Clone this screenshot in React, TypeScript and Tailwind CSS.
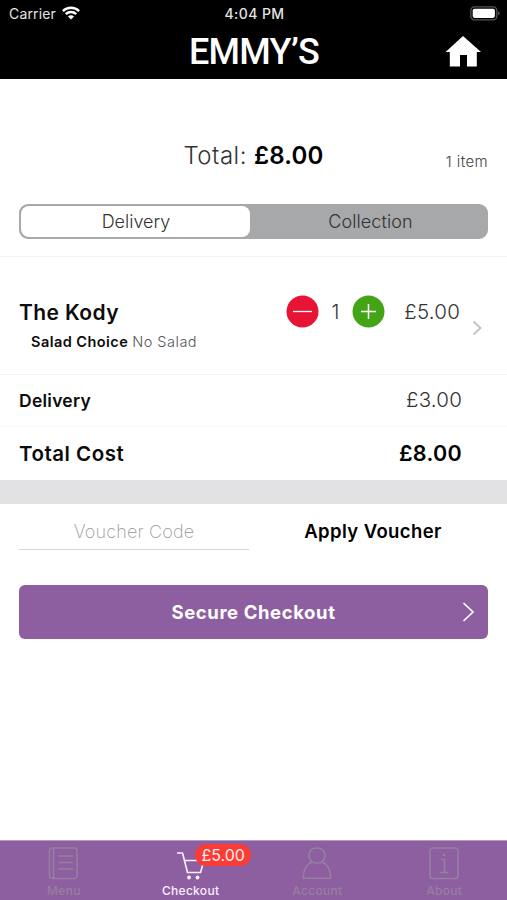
import type { ReactNode } from "react";

function StatusBar() {
  return (
    <div className="flex h-7 items-center justify-between pr-[7px] pl-[9px] text-[#e4e4e4]">
      <div className="flex w-40 items-center gap-[6px]">
        <span className="-mt-px text-[14px] tracking-[0.15px]">Carrier</span>
        <svg className="-mt-[2px]" width="18" height="14" viewBox="0 0 18 14" fill="none" stroke="#fff" strokeWidth="2.4">
          <path d="M0.9 5.1C5.3 0.7 12.7 0.7 17.1 5.1" />
          <path d="M3.8 8.1C6.6 5.3 11.4 5.3 14.2 8.1" />
          <path d="M9 13.6L5.9 10.5C7.6 8.9 10.4 8.9 12.1 10.5Z" fill="#fff" stroke="none" />
        </svg>
      </div>
      <span className="-mt-px text-[14px] font-medium tracking-[0.4px]">4:04 PM</span>
      <div className="flex w-40 justify-end">
        <svg className="-mt-[2px]" width="30" height="15" viewBox="0 0 30 15">
          <rect x="0.8" y="0.8" width="26" height="13" rx="3.6" fill="none" stroke="#555" strokeWidth="1.3" />
          <rect x="2.7" y="2.7" width="22.2" height="9.2" rx="1.8" fill="#fff" />
          <path d="M28.2 5.2Q31 7.3 28.2 9.4Z" fill="#666" />
        </svg>
      </div>
    </div>
  );
}

function Header() {
  return (
    <header className="h-[79px] bg-black">
      <StatusBar />
      <div className="flex h-[46px] items-center justify-between pr-[26px] pl-[26px]">
        <div className="w-9" />
        <h1 className="pt-px pl-px font-['Roboto'] text-[36px] leading-[46px] font-medium tracking-[-0.7px] text-white">EMMY’S</h1>
        <svg width="36" height="32" viewBox="0 0 36 32" fill="#fff">
          <path d="M18 1L36 17H31.8V31.5H22V20H15V31.5H4.8V17H0.6Z" />
        </svg>
      </div>
    </header>
  );
}

function Tab({ label, active, children }: { label: string; active?: boolean; children: ReactNode }) {
  return (
    <div className={active ? "flex flex-1 flex-col items-center text-[#fbeeff]" : "flex flex-1 flex-col items-center text-[#967f9f]"}>
      <div className="relative mt-[6px] h-[36px]">{children}</div>
      <span className="pl-px text-[12px] leading-[16px] font-medium tracking-[0.3px]">{label}</span>
    </div>
  );
}

export default function App() {
  return (
    <div className="flex h-[900px] w-[507px] flex-col overflow-hidden bg-white font-['Inter','Liberation_Sans',sans-serif] text-[#0c0c0c]">
      <Header />

      <section className="h-[178px] border-b border-[#f3f3f3] px-[19px] pt-[60px]">
        <div className="grid grid-cols-[1fr_auto_1fr] items-center">
          <div />
          <div className="flex gap-[7px] text-[24px] leading-8">
            <span className="pt-px font-light tracking-[0.5px] text-[#333]">Total:</span>
            <span className="pt-px font-semibold tracking-[0.2px] text-black">£8.00</span>
          </div>
          <span className="pt-3 text-right text-[15px] leading-5 font-light tracking-[0.4px] text-[#444]">1 item</span>
        </div>
        <div className="mt-[32px] flex h-[35px] rounded-[9px] border-2 border-[#a6a8a9] bg-[#a6a8a9] text-center text-[18px] leading-[32px] font-light text-[#333]">
          <div className="w-[229px] rounded-[8px] bg-white pl-px">Delivery</div>
          <div className="flex-1 pl-[5px] tracking-[0.1px]">Collection</div>
        </div>
      </section>

      <section className="flex h-[118px] border-b border-[#f3f3f3] pl-[19px]">
        <div className="flex-1 pt-[41px]">
          <div className="text-[21px] leading-[30px] font-semibold tracking-[0.4px]">The Kody</div>
          <div className="flex gap-[5px] pt-1 pl-3 text-[14.5px] leading-5">
            <span className="font-semibold tracking-[0.45px]">Salad Choice</span>
            <span className="-ml-px font-light tracking-[0.5px] text-[#555]">No Salad</span>
          </div>
        </div>
        <div className="mt-[38px] flex h-8 items-center text-[20px] font-light text-[#333]">
          <svg width="33" height="33" viewBox="0 0 33 33">
            <circle cx="16.5" cy="16.5" r="16" fill="#e71435" />
            <path d="M7 16.5H26" stroke="#fff" strokeWidth="1.3" />
          </svg>
          <span className="w-[33px] pt-px text-center">1</span>
          <svg width="33" height="33" viewBox="0 0 33 33">
            <circle cx="16.5" cy="16.5" r="16" fill="#43a516" />
            <path d="M9 16.5H24M16.5 9V24" stroke="#fff" strokeWidth="1.5" />
          </svg>
          <span className="w-[75px] pt-[2px] text-right text-[20.5px] tracking-[0.2px]">£5.00</span>
        </div>
        <div className="w-[47px] pt-[63px] pl-[12px]">
          <svg width="11" height="16" viewBox="0 0 11 16" fill="none" stroke="#c4c4c6" strokeWidth="2">
            <path d="M1.5 1.5L8.5 8L1.5 14.5" />
          </svg>
        </div>
      </section>

      <section className="flex h-[52px] items-center justify-between border-b border-[#fafafa] pr-[45px] pl-[19px]">
        <span className="pt-px text-[17.5px] font-semibold tracking-[0.25px]">Delivery</span>
        <span className="-mt-px text-[20.5px] font-light tracking-[0.2px] text-[#333]">£3.00</span>
      </section>
      <section className="flex h-[53px] items-center justify-between pr-[45px] pl-[19px] text-[20px] font-semibold">
        <span className="pt-[2px] text-[20.5px] tracking-[0.5px]">Total Cost</span>
        <span className="text-[21.5px] tracking-[0.3px] text-black">£8.00</span>
      </section>
      <div className="h-[24px] bg-[#e2e2e4]" />

      <section className="flex h-[46px] px-[19px] text-center text-[18px] leading-[56px]">
        <div className="w-[230px] border-b border-[#d5d6da] font-extralight tracking-[0.15px] text-[#999]">Voucher Code</div>
        <div className="flex-1 pl-[9px] text-[18.5px] leading-[55px] font-semibold tracking-[0.4px] text-black">Apply Voucher</div>
      </section>

      <button className="mx-[19px] mt-[35px] flex h-[54px] items-center justify-between rounded-[6px] bg-[#8d5fa1] pr-[13px] pl-[13px] text-[18.5px] font-bold text-white">
        <span className="w-[13px]" />
        <span className="pt-[2px] tracking-[0.6px]">Secure Checkout</span>
        <svg width="13" height="20" viewBox="0 0 13 20" fill="none" stroke="#fff" strokeWidth="1.7">
          <path d="M1.5 1L11 10L1.5 19" />
        </svg>
      </button>

      <nav className="mt-auto flex h-[60px] border-t border-[#b49cc0] bg-[#8d5fa1]">
        <Tab label="Menu">
          <svg width="30" height="34" viewBox="0 0 30 34" fill="none" stroke="currentColor" strokeWidth="1.6">
            <rect x="1.5" y="1" width="27.5" height="30.5" rx="3" />
            <path d="M5.5 1V31.5M10.5 9H25M10.5 15.5H25M10.5 22H25" />
          </svg>
        </Tab>
        <Tab label="Checkout" active>
          <svg width="28" height="36" viewBox="0 0 28 36" fill="none" stroke="currentColor" strokeWidth="1.6">
            <path d="M1 6H6.5L11.5 25.5H24.5L28 13.5H8.5" strokeLinejoin="round" />
            <circle cx="13" cy="30.5" r="1.9" fill="currentColor" stroke="none" />
            <circle cx="21.5" cy="30.5" r="1.9" fill="currentColor" stroke="none" />
          </svg>
          <span className="absolute top-[-3px] left-[19px] h-[22px] w-[56px] rounded-full bg-[#fb3b35] text-center text-[16px] leading-[22px] text-[#fff0ee]">£5.00</span>
        </Tab>
        <Tab label="Account">
          <svg width="30" height="34" viewBox="0 0 30 34" fill="none" stroke="currentColor" strokeWidth="1.6">
            <path d="M10.5 14.8C5 11 6 1 15 1S25 11 19.5 14.8C25.5 17 28.7 22 28.7 31.3H1.3C1.3 22 4.5 17 10.5 14.8C13 16.5 17 16.5 19.5 14.8" strokeLinejoin="round" />
          </svg>
        </Tab>
        <Tab label="About">
          <svg width="30" height="34" viewBox="0 0 30 34" fill="none" stroke="currentColor" strokeWidth="1.6">
            <rect x="1" y="1" width="28" height="30.5" rx="3" />
            <path d="M12 12.5H15.5V25.5M11.5 25.5H19.5" />
            <circle cx="15" cy="8" r="1.3" fill="currentColor" stroke="none" />
          </svg>
        </Tab>
      </nav>
    </div>
  );
}
